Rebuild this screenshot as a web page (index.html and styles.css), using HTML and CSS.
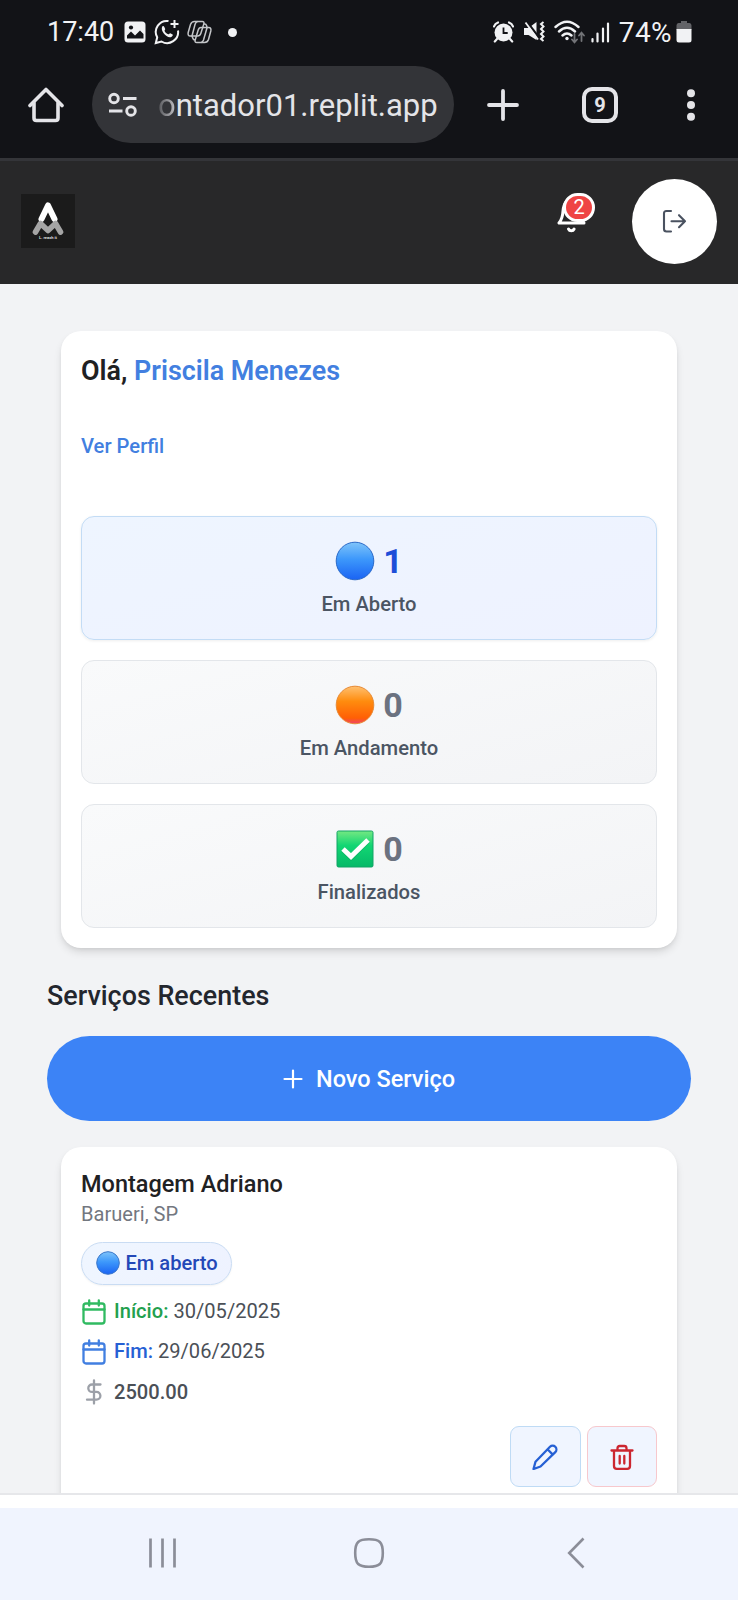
FILE: index.html
```html
<!DOCTYPE html>
<html lang="pt-BR">
<head>
<meta charset="utf-8">
<title>Painel do Montador</title>
<link rel="stylesheet" href="styles.css">
</head>
<body>
<svg width="0" height="0" class="defs" aria-hidden="true">
  <defs>
    <linearGradient id="blue" x1="0" y1="0" x2="0" y2="1"><stop offset="0" stop-color="#7fc4fa"/><stop offset=".45" stop-color="#3d98fb"/><stop offset="1" stop-color="#1a63f3"/></linearGradient>
    <linearGradient id="orange" x1="0" y1="0" x2="0" y2="1"><stop offset="0" stop-color="#ffc070"/><stop offset=".4" stop-color="#ff8c0e"/><stop offset=".85" stop-color="#ff5f05"/><stop offset="1" stop-color="#f0426c"/></linearGradient>
    <linearGradient id="green" x1="0" y1="0" x2="0" y2="1"><stop offset="0" stop-color="#74e882"/><stop offset=".4" stop-color="#12d673"/><stop offset="1" stop-color="#06b968"/></linearGradient>
  </defs>
</svg>
<div class="phone">
  <div class="chrome">
    <div class="status">
      <span class="clock">17:40</span>
      <svg class="s-img" width="22" height="22" viewBox="0 0 22 22"><rect x=".5" y=".5" width="21" height="21" rx="3.5" fill="#f1f2f4"/><circle cx="7" cy="6.5" r="2.1" fill="#121317"/><path d="M3 17.5v-3l4-4 4 4 5-5 3.500 3.500v4.500z" fill="#121317"/></svg>
      <svg class="s-wa" width="26" height="26" viewBox="0 0 26 26" fill="none" stroke="#f1f2f4" stroke-width="2"><path d="M14.500 2.100A11 11 0 0 0 3.200 18.300L1.800 24l5.700-1.500A11 11 0 0 0 24 11.500"/><path d="M20.500 1v8M16.500 5h8"/><path d="M8.300 7.500c.8-.8 1.600-.4 2 .5l.9 2c.2.700-.9 1.200-.6 1.900.8 1.700 2 2.700 3.700 3.400.8.200 1.300-1.300 2-1.100l2.300 1.200c.8.500-.5 2.800-2.700 2.800C11.700 18.200 6 11.300 8.300 7.500z" fill="#f1f2f4" stroke="none"/></svg>
      <svg class="s-co" width="25" height="24" viewBox="0 0 25 24" fill="none" stroke="#c4c6c9" stroke-width="1.500" stroke-linejoin="round"><path d="M7.500 1.500h7.700q2.400 0 1.600 2.500l-3 9.500q-.8 2.500-3.300 2.500H3.300Q.5 16 1.200 12.500L3.500 4.500Q4.500 1.500 7.500 1.500z"/><path d="M14 7.500h7.700q2.800 0 2.100 3.500l-2.300 8.500q-1 3-4 3H9.800q-2.400 0-1.600-2.500l3-10q.8-2.500 2.800-2.500z"/><path d="M10.500 1.500Q8.700 2 8 4.500L5 16l.7 2q.5 2 2.500 2M16.800 4h1q1.200 0 1.700 1.500l.6 2L16.500 20q-.7 2.200-2.500 2.500"/></svg>
      <i class="s-dot"></i>
      <span class="grow"></span>
      <svg class="s-al" width="21" height="22" viewBox="0 0 21 22"><circle cx="10.500" cy="11.500" r="9" fill="#f1f2f4"/><path d="M1 5.500Q2 2.500 5 1.500M20 5.500Q19 2.500 16 1.500M4 18l-2.200 2.500M17 18l2.200 2.500" stroke="#f1f2f4" stroke-width="2.200" stroke-linecap="round" fill="none"/><path d="M10.500 6.500v5.500h4.200" stroke="#121317" stroke-width="1.800" fill="none"/></svg>
      <svg class="s-mu" width="21" height="22" viewBox="0 0 21 22"><path d="M0 7h4.500L12.500 1v18L4.500 14H0z" fill="#f1f2f4"/><path d="M2.500 0l12 16" stroke="#121317" stroke-width="2.200"/><path d="M1.500 1.500l12.500 17" stroke="#f1f2f4" stroke-width="1.800"/><path d="M19.500 1l-2.500 2 2.500 2.500L17 8l2.500 2.500L17 13l2.500 2.500L17 18l2.500 2" fill="none" stroke="#f1f2f4" stroke-width="2"/></svg>
      <svg class="s-wi" width="31" height="24" viewBox="0 0 31 24" fill="none" stroke="#f1f2f4" stroke-width="2.400" stroke-linecap="round"><path d="M1.500 7Q13 -3.500 24.500 7M5 11.500Q13 4 21 11.500M8.500 15.500Q13 11.500 17.500 15.500"/><circle cx="13" cy="18.500" r="1.700" fill="#f1f2f4" stroke="none"/><path d="M20.500 14v8M18 19.500l2.500 2.800 2.500-2.800M27.500 21v-8M25 15.500l2.500-2.800 2.500 2.800" stroke="#727377" stroke-width="1.800"/></svg>
      <svg class="s-si" width="19" height="21" viewBox="0 0 19 21" stroke="#f1f2f4" stroke-width="2.200" stroke-linecap="round"><path d="M1.500 17v2.500M6.500 11.500v8M12 6.500v13M17 1.500v18"/></svg>
      <span class="pct">74%</span>
      <svg class="s-ba" width="16" height="22" viewBox="0 0 16 22"><path d="M5 0h6v2h2.500Q15.500 2 15.500 4.500V9H.5V4.500Q.5 2 2.500 2H5z" fill="#626367"/><path d="M.5 8h15v11q0 2.500-2.500 2.500H3Q.5 21.500.5 19z" fill="#f1f2f4"/></svg>
    </div>
    <div class="toolbar">
      <svg class="home" width="36" height="36" viewBox="0 0 36 36" fill="none" stroke="#e4e4e8" stroke-width="3.600" stroke-linecap="round" stroke-linejoin="round"><path d="M2 18.500L18 2.500l16 16"/><path d="M6 16v15q0 2.500 2.500 2.500h19q2.500 0 2.500-2.500V16"/></svg>
      <div class="omnibox">
        <svg width="30" height="26" viewBox="0 0 30 26" fill="none" stroke="#e4e4e8" stroke-width="2.900"><circle cx="6" cy="6.500" r="4.300"/><path d="M15 6.500h13.500M1 19h13.500"/><circle cx="23" cy="19" r="4.300"/></svg>
        <span class="url"><span class="fade">o</span>ntador01.replit.app</span>
      </div>
      <svg class="plus" width="32" height="32" viewBox="0 0 32 32" stroke="#e4e4e8" stroke-width="3.800" stroke-linecap="round"><path d="M16 2v28M2 16h28"/></svg>
      <span class="tabs">9</span>
      <svg class="more" width="10" height="32" viewBox="0 0 10 32" fill="#e4e4e8"><circle cx="5" cy="4.200" r="4"/><circle cx="5" cy="16" r="4"/><circle cx="5" cy="27.700" r="4"/></svg>
    </div>
  </div>

  <header class="header">
    <div class="logo">
      <svg width="54" height="54" viewBox="0 0 54 54" fill="none" stroke-linecap="round" stroke-linejoin="round"><path d="M20.500 25L27 11.500 33.500 25" stroke="#fff" stroke-width="6"/><path d="M14.500 38l5-8.500 7.500 7 7.500-7 5 8.500" stroke="#a5a5a5" stroke-width="5.600"/></svg>
      <span class="logo-name">L. reach it</span>
    </div>
    <div class="bell">
      <svg width="30" height="42" viewBox="0 0 30 42" fill="none" stroke="#fff" stroke-width="3" stroke-linecap="round" stroke-linejoin="round"><path d="M18 4Q7 6 6 18c-.3 6-1.500 9-4 12h25c-1.500-2-2.500-4-3-6"/><path d="M11.500 36q.8 1.700 2.800 1.700t2.800-1.700"/></svg>
      <span class="badge">2</span>
    </div>
    <div class="logout">
      <svg width="26" height="26" viewBox="0 0 26 26" fill="none" stroke="#4a5260" stroke-width="2.100" stroke-linecap="round" stroke-linejoin="round"><path d="M9 3H4.500Q2 3 2 5.500v15.500q0 2.500 2.500 2.500H9M9.500 13.200H23M17 7.200l6 6-6 6"/></svg>
    </div>
  </header>

  <main class="main">
    <section class="card welcome">
      <h1>Olá, <span>Priscila Menezes</span></h1>
      <a class="profile">Ver Perfil</a>
      <div class="stats">
        <div class="stat open">
          <div class="count"><svg width="40" height="40" viewBox="0 0 40 40"><circle cx="20" cy="20" r="18.800" fill="url(#blue)" stroke="#2a69c8"/></svg><b>1</b></div>
          <p>Em Aberto</p>
        </div>
        <div class="stat">
          <div class="count"><svg width="40" height="40" viewBox="0 0 40 40"><circle cx="20" cy="20" r="18.800" fill="url(#orange)" stroke="#e88a34"/></svg><b>0</b></div>
          <p>Em Andamento</p>
        </div>
        <div class="stat">
          <div class="count"><svg width="40" height="40" viewBox="0 0 40 40"><rect x="2" y="2" width="36" height="36" rx="1.500" fill="url(#green)" stroke="#12a466"/><path d="M8 20l8 7.500L33 11" fill="none" stroke="#079c58" stroke-opacity=".5" stroke-width="5" transform="translate(0 1)"/><path d="M8 20l8 7.500L33 11" fill="none" stroke="#fff" stroke-width="5"/></svg><b>0</b></div>
          <p>Finalizados</p>
        </div>
      </div>
    </section>

    <h2>Serviços Recentes</h2>
    <button class="new"><svg width="20" height="20" viewBox="0 0 20 20" stroke="#fff" stroke-width="2.200" stroke-linecap="round"><path d="M10 1.500v17M1.500 10h17"/></svg>Novo Serviço</button>

    <section class="card service">
      <h3>Montagem Adriano</h3>
      <p class="place">Barueri, SP</p>
      <span class="chip"><svg width="24" height="24" viewBox="0 0 24 24"><circle cx="12" cy="12" r="11.300" fill="url(#blue)" stroke="#3b77c9"/></svg>Em aberto</span>
      <div class="row"><svg class="green" width="26" height="26" viewBox="0 0 26 26"><rect x="2.500" y="4.500" width="21" height="20" rx="2.500"/><path d="M2.500 10.500h21M8.200 1.500v5M17.800 1.500v5"/></svg><span><b class="green">Início:</b> 30/05/2025</span></div>
      <div class="row"><svg class="blue" width="26" height="26" viewBox="0 0 26 26"><rect x="2.500" y="4.500" width="21" height="20" rx="2.500"/><path d="M2.500 10.500h21M8.200 1.500v5M17.800 1.500v5"/></svg><span><b class="blue">Fim:</b> 29/06/2025</span></div>
      <div class="row"><svg class="gray" width="26" height="26" viewBox="0 0 26 26"><path d="M13 1.500v23M19.500 5.500h-8.500a3.700 3.700 0 0 0 0 7.400h4.500a3.900 3.900 0 0 1 0 7.800H6"/></svg><b class="price">2500.00</b></div>
      <div class="actions">
        <span class="act edit"><svg width="26" height="26" viewBox="0 0 26 26"><path d="M18 2.800a3.700 3.700 0 0 1 5.300 5.300L8.500 22.500 1.500 25l2-7.300z M15.500 5.300l5.300 5.300"/></svg></span>
        <span class="act del"><svg width="26" height="26" viewBox="0 0 26 26"><path d="M2.500 6.500h21M21 6.500v15.500q0 2.800-2.800 2.800H7.800Q5 24.800 5 22V6.500M8.500 6.500V4.300Q8.500 2 10.800 2h4.400q2.300 0 2.300 2.300v2.200M10.700 12v7.500M15.300 12v7.500"/></svg></span>
      </div>
    </section>
  </main>

  <footer class="foot">
    <div class="strip"></div>
    <nav class="nav">
      <svg width="30" height="32" viewBox="0 0 30 32" stroke="#8b8d98" stroke-width="2.700" fill="none"><path d="M2.500 1.500v29M14.500 1.500v29M26.500 1.500v29"/></svg>
      <svg class="nav-home" width="32" height="32" viewBox="0 0 32 32" stroke="#8b8d98" stroke-width="2.600" fill="none"><path d="M16 2.200C26.500 2.200 29.800 5 29.800 16S26.500 29.800 16 29.800 2.200 27 2.200 16 5.500 2.200 16 2.200z"/></svg>
      <svg class="nav-back" width="18" height="32" viewBox="0 0 18 32" stroke="#8b8d98" stroke-width="2.600" fill="none"><path d="M16.500 1.500L2.200 16l14.300 14.500"/></svg>
    </nav>
  </footer>
</div>
</body>
</html>
```
FILE: styles.css
```css
* { box-sizing: border-box; margin: 0; padding: 0; }
body { font-family: Roboto, "Liberation Sans", sans-serif; background: #f2f3f5; }
svg { display: block; flex: none; }
.defs { position: absolute; }
.phone { width: 738px; height: 1600px; display: flex; flex-direction: column; overflow: hidden; }

.chrome { height: 161px; flex: none; background: #121317; border-bottom: 3px solid #343539; }
.status { height: 66px; padding: 0 46px 2px 47px; display: flex; align-items: center; color: #f1f2f4; font-size: 27px; }
.clock { width: 77px; }
.s-wa { margin-left: 8px; }
.s-co { margin-left: 7px; }
.s-dot { width: 9px; height: 9px; border-radius: 50%; background: #f1f2f4; margin-left: 16px; }
.grow { flex: 1; }
.s-mu { margin-left: 10px; }
.s-wi { margin-left: 9px; }
.s-si { margin-left: 6px; }
.pct { margin-left: 9px; font-size: 28px; letter-spacing: .4px; }
.s-ba { margin-left: 4px; }

.toolbar { height: 77px; display: flex; align-items: center; padding-left: 28px; }
.omnibox { width: 362px; height: 77px; margin-left: 28px; padding-left: 16px; border-radius: 39px; background: #333438; display: flex; align-items: center; }
.url { margin-left: 20px; padding-top: 1px; font-size: 31px; color: #e4e4e8; white-space: nowrap; }
.fade { background: linear-gradient(90deg, #55565a, #c4c4c8); -webkit-background-clip: text; background-clip: text; color: transparent; }
.plus { margin-left: 33px; }
.tabs { width: 36px; height: 36px; margin-left: 63px; border: 4px solid #e4e4e8; border-radius: 10px; color: #e4e4e8; font-size: 20px; line-height: 28px; font-weight: 700; text-align: center; }
.more { margin-left: 68px; }

.header { height: 123px; flex: none; background: #282829; display: flex; align-items: center; padding: 0 21px 3px; }
.logo { width: 54px; height: 54px; background: #1b1b1b; position: relative; }
.logo-name { position: absolute; left: 0; right: 0; top: 41px; text-align: center; font-size: 4px; line-height: 5px; font-weight: 700; color: #ddd; }
.bell { width: 38px; height: 42px; margin: 0 0 14px 482px; position: relative; }
.badge { position: absolute; left: 6px; top: 0; width: 32px; height: 29px; border: 3px solid #fff; border-radius: 16px; background: #ef4444; color: #fff; font-size: 20px; line-height: 23px; text-align: center; }
.logout { width: 85px; height: 85px; margin-left: 37px; border-radius: 50%; background: #fff; display: flex; align-items: center; justify-content: center; }

.main { flex: 1; min-height: 0; overflow: hidden; padding: 47px 47px 0; }
.card { margin: 0 14px; padding: 20px; background: #fff; border-radius: 20px; box-shadow: 0 5px 8px -1px rgba(0,0,0,.12), 0 2px 5px -2px rgba(0,0,0,.1); }
.welcome { height: 617px; }
h1 { font-size: 26.900px; line-height: 40px; font-weight: 600; color: #1f2123; }
h1 span, .profile { color: #427fe0; }
.profile { display: block; margin-top: 41px; font-size: 20.200px; line-height: 29px; font-weight: 500; }
.stats { margin-top: 55px; display: grid; gap: 20.500px; }
.stat { height: 123.700px; padding-top: 24px; border: 1px solid #e3e6ea; border-radius: 13px; background: linear-gradient(165deg, #f9fafb, #f3f4f6); text-align: center; color: #6b7280; }
.stat.open { background: linear-gradient(165deg, #eef5ff, #eef2ff); border: 1.500px solid #c3dcf5; box-shadow: 0 1px 3px rgba(0,0,0,.07); }
.count { height: 40px; display: flex; align-items: center; justify-content: center; gap: 8px; }
.count b { font-size: 34px; line-height: 40px; font-weight: 700; }
.open b { color: #1d4ed8; }
.stat p { margin-top: 11px; font-size: 20.200px; line-height: 24px; font-weight: 500; color: #4b5563; }

h2 { margin-top: 30px; font-size: 26.900px; line-height: 36px; font-weight: 500; color: #23262d; }
.new { width: 644px; height: 85px; margin-top: 22px; border: 0; border-radius: 43px; background: #3c83f6; color: #fff; font: 500 23.500px Roboto, sans-serif; display: flex; align-items: center; justify-content: center; gap: 13px; }

.service { margin-top: 26px; height: 380px; display: flex; flex-direction: column; align-items: flex-start; color: #4b5057; font-size: 20.100px; }
h3 { font-size: 23.500px; line-height: 34px; font-weight: 500; color: #1f2123; }
.place { line-height: 26px; color: #73777f; }
.chip { height: 43px; margin-top: 15px; padding: 0 13.500px 2px; display: flex; align-items: center; gap: 6px; border: 1.500px solid #c9dcf3; border-radius: 22px; background: linear-gradient(135deg, #eff6ff, #eef2ff); font-weight: 500; color: #2348b8; box-shadow: 0 1px 2px rgba(0,0,0,.05); }
.row { height: 26px; margin-top: 14px; display: flex; align-items: center; gap: 7px; }
.row span { margin-top: -2px; }
.row svg, .act svg { fill: none; stroke: currentColor; stroke-width: 2.300; stroke-linecap: round; stroke-linejoin: round; }
.row b { font-weight: 500; }
.green { color: #22a04d; }
svg.green { color: #30ba61; }
.blue { color: #2660d4; }
svg.blue { color: #417fe1; }
.gray { color: #9ca0a8; }
.actions { align-self: flex-end; margin-top: 21px; display: flex; gap: 6px; }
.act { width: 70.500px; height: 61px; border: 1.500px solid #bfdbf5; border-radius: 9px; background: #f0f5ff; display: flex; align-items: center; justify-content: center; color: #2660d4; }
.act.del { border-color: #f7c8cd; color: #cc2630; }

.foot { height: 107px; flex: none; }
.strip { height: 15px; background: #fff; border-top: 2px solid #e6e7ea; }
.nav { height: 92px; padding: 0 0 2px 148px; background: #f0f4fe; display: flex; align-items: center; }
.nav-home { margin-left: 175px; }
.nav-back { margin-left: 182px; }
```
